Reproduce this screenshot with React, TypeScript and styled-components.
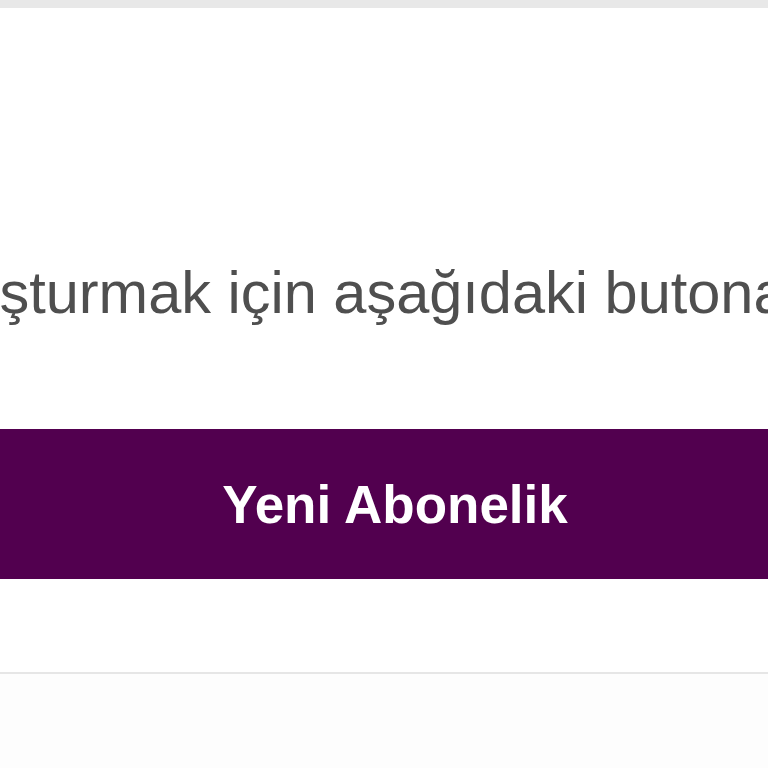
import React from "react";
import styled, { createGlobalStyle } from "styled-components";

const GlobalStyle = createGlobalStyle`
  html, body {
    margin: 0;
    padding: 0;
    background: #fdfdfd;
    overflow: hidden;
  }
  body {
    font-family: "Liberation Sans", Arial, sans-serif;
  }
`;

const Page = styled.div`
  width: 768px;
  height: 768px;
  overflow: hidden;
  display: flex;
  flex-direction: column;
`;

const TopStrip = styled.div`
  height: 8px;
  background: #e8e8e8;
  flex-shrink: 0;
`;

const Card = styled.section`
  background: #ffffff;
  border-bottom: 2px solid #e6e6e6;
  padding: 253px 0 93px 22px;
  display: flex;
  justify-content: center;
`;

const Content = styled.div`
  width: 1852px;
  flex-shrink: 0;
  display: flex;
  flex-direction: column;
`;

const Message = styled.p`
  margin: 0;
  font-size: 59.5px;
  line-height: 64px;
  color: #4f4f4f;
  white-space: nowrap;
  text-align: left;
`;

const PrimaryButton = styled.button`
  margin-top: 104px;
  width: 100%;
  height: 150px;
  border: none;
  border-radius: 4px;
  background: #52004f;
  color: #ffffff;
  font-family: "Liberation Sans", Arial, sans-serif;
  font-weight: 700;
  font-size: 53px;
  cursor: pointer;
`;

export default function App() {
  return (
    <>
      <GlobalStyle />
      <Page>
        <TopStrip />
        <Card>
          <Content>
            <Message>
              Yeni bir abonelik oluşturmak için aşağıdaki butona tıklayın.
            </Message>
            <PrimaryButton>Yeni Abonelik</PrimaryButton>
          </Content>
        </Card>
      </Page>
    </>
  );
}
